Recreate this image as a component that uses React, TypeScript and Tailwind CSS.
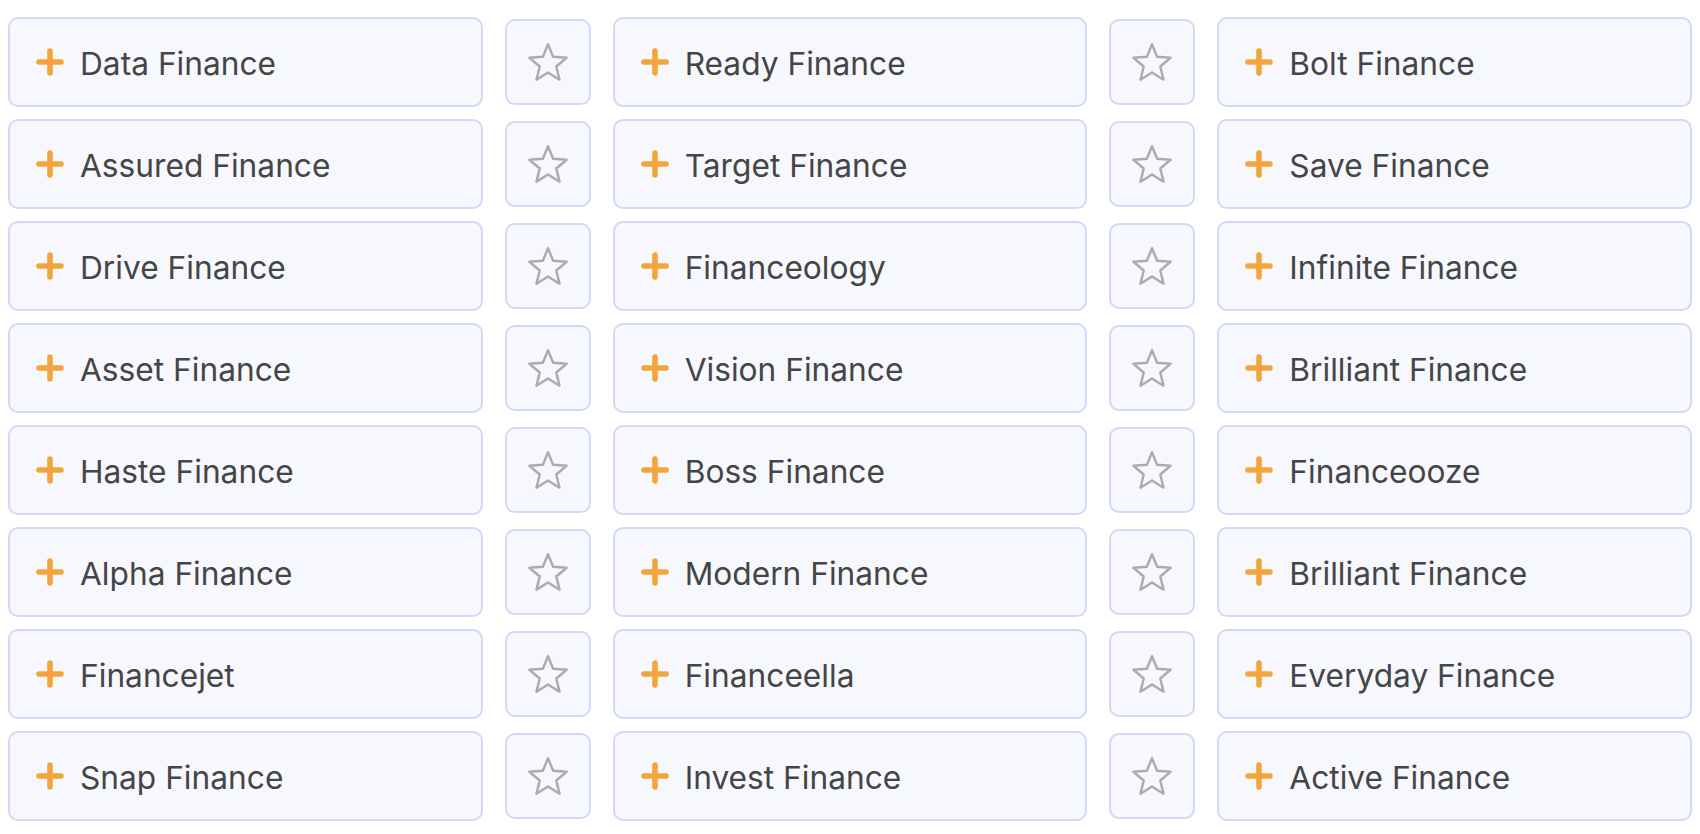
import React from "react";

const rows: [string, string, string][] = [
  ["Data Finance", "Ready Finance", "Bolt Finance"],
  ["Assured Finance", "Target Finance", "Save Finance"],
  ["Drive Finance", "Financeology", "Infinite Finance"],
  ["Asset Finance", "Vision Finance", "Brilliant Finance"],
  ["Haste Finance", "Boss Finance", "Financeooze"],
  ["Alpha Finance", "Modern Finance", "Brilliant Finance"],
  ["Financejet", "Financeella", "Everyday Finance"],
  ["Snap Finance", "Invest Finance", "Active Finance"],
];

function starPoints(cx: number, cy: number, R: number, r: number) {
  const pts: string[] = [];
  for (let i = 0; i < 10; i++) {
    const ang = (-90 + i * 36) * (Math.PI / 180);
    const rad = i % 2 === 0 ? R : r;
    pts.push(`${(cx + rad * Math.cos(ang)).toFixed(2)},${(cy + rad * Math.sin(ang)).toFixed(2)}`);
  }
  return pts.join(" ");
}

const STAR = starPoints(22, 23.8, 19.6, 8.7);

function Plus() {
  return (
    <svg width="28" height="28" viewBox="0 0 28 28" className="shrink-0">
      <path d="M14 3v22M3 14h22" stroke="#f3a53b" strokeWidth="5.6" strokeLinecap="round" fill="none" />
    </svg>
  );
}

function Star() {
  return (
    <svg width="44" height="44" viewBox="0 0 44 44">
      <polygon points={STAR} fill="none" stroke="#ababab" strokeWidth="2.4" strokeLinejoin="round" />
    </svg>
  );
}

function Card({ label }: { label: string }) {
  return (
    <div className="flex h-[90px] items-center gap-4 rounded-[10px] border-2 border-[#d1d8f9] bg-[#f7f8fe] pl-[26px]">
      <Plus />
      <span className="mt-[3px] text-[31.7px] leading-none text-[#454545]" style={{ fontFamily: "Inter, 'Noto Sans', sans-serif" }}>
        {label}
      </span>
    </div>
  );
}

function StarBox() {
  return (
    <div className="flex h-[86px] w-[86px] items-center justify-center self-center rounded-[10px] border-2 border-[#d1d8f9] bg-[#f7f8fe]">
      <Star />
    </div>
  );
}

export default function App() {
  return (
    <div className="min-h-[834px] bg-white px-2 pt-[17px]" style={{ fontFamily: "Inter, 'Noto Sans', sans-serif" }}>
      <div className="grid grid-cols-[1fr_86px_1fr_86px_1fr] gap-x-[22px] gap-y-3">
        {rows.map((r, i) => (
          <React.Fragment key={i}>
            <Card label={r[0]} />
            <StarBox />
            <Card label={r[1]} />
            <StarBox />
            <Card label={r[2]} />
          </React.Fragment>
        ))}
      </div>
    </div>
  );
}
